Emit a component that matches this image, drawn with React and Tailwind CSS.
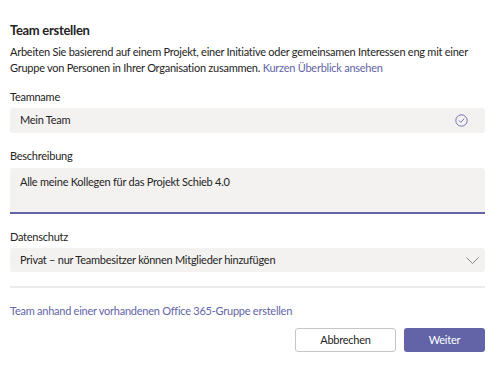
import React from 'react';

export default function App() {
  return (
    <div className="w-[500px] h-[377px] bg-white text-[#252423] px-[10px] pt-[20px]" style={{ fontFamily: 'Lato, sans-serif' }}>
      <h1 className="text-[13px] font-bold leading-[20px] tracking-[-0.3px]">Team erstellen</h1>
      <p className="mt-[4px] text-[11px] leading-[16px] tracking-[-0.25px]">
        Arbeiten Sie basierend auf einem Projekt, einer Initiative oder gemeinsamen Interessen eng mit einer Gruppe von Personen in Ihrer Organisation zusammen. <a className="text-[#6264a7]">Kurzen Überblick ansehen</a>
      </p>

      {/* Teamname */}
      <label className="block mt-[13px] text-[11px] leading-[16px] tracking-[-0.25px]">Teamname</label>
      <div className="mt-[3px] h-[25px] w-[475px] bg-[#f3f2f1] rounded-[3px] flex items-center justify-between pl-[10px] pr-[17px]">
        <span className="text-[11px] tracking-[-0.25px]">Mein Team</span>
        <svg width="13" height="13" viewBox="0 0 16 16" fill="none" stroke="#6264a7" strokeWidth="1.1">
          <circle cx="8" cy="8" r="7" />
          <path d="M5 8.2l2 2 4-4" strokeLinecap="round" strokeLinejoin="round" />
        </svg>
      </div>

      {/* Beschreibung */}
      <label className="block mt-[15px] text-[11px] leading-[16px] tracking-[-0.25px]">Beschreibung</label>
      <div className="mt-[4px] h-[46px] w-[475px] bg-[#f3f2f1] rounded-t-[3px] border-b-2 border-[#6264a7] pl-[10px] pt-[6px]">
        <div className="text-[11px] leading-[16px] tracking-[-0.25px]">Alle meine Kollegen für das Projekt Schieb 4.0</div>
      </div>

      {/* Datenschutz */}
      <label className="block mt-[15px] text-[11px] leading-[16px] tracking-[-0.25px]">Datenschutz</label>
      <div className="mt-[3px] h-[24px] w-[475px] bg-[#f3f2f1] rounded-[3px] flex items-center justify-between pl-[10px] pr-[6px]">
        <span className="text-[11px] tracking-[-0.25px]">Privat – nur Teambesitzer können Mitglieder hinzufügen</span>
        <svg width="13" height="7" viewBox="0 0 13 7" fill="none" stroke="#8a8886" strokeWidth="1">
          <path d="M0.5 0.5l6 6 6-6" />
        </svg>
      </div>

      <div className="mt-[14px] w-[475px] h-[2px] bg-[#edebe9]" />

      <div className="mt-[15px] text-[11px] leading-[16px] tracking-[-0.25px] text-[#6264a7]">
        Team anhand einer vorhandenen Office 365-Gruppe erstellen
      </div>

      <div className="mt-[9px] w-[475px] flex justify-end gap-[8px]">
        <button className="w-[101px] h-[24px] border border-[#c8c6c4] rounded-[3px] bg-white text-[11px] tracking-[-0.25px] text-[#252423]">Abbrechen</button>
        <button className="w-[81px] h-[24px] rounded-[3px] bg-[#6264a7] text-[11px] tracking-[-0.25px] text-white">Weiter</button>
      </div>
    </div>
  );
}
